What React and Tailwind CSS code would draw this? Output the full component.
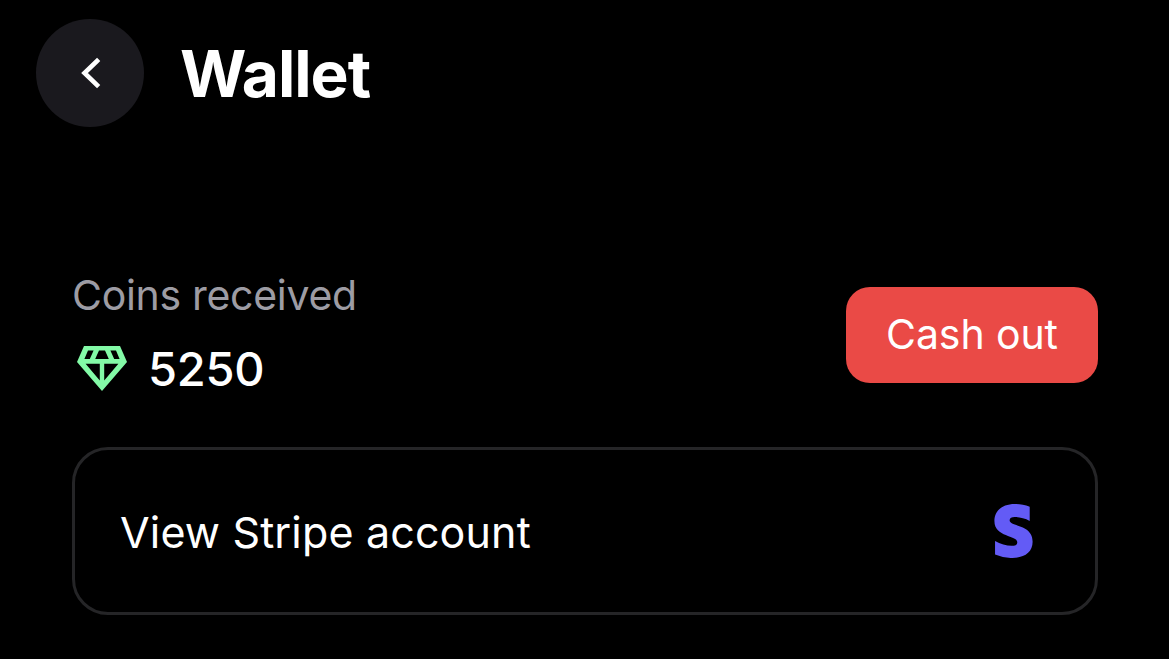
import React from 'react';
import { FaStripeS } from 'react-icons/fa';

const BackIcon = () => (
  <svg width="32" height="36" viewBox="0 0 32 36" fill="none">
    <path d="M23 6 L10.5 18 L23 30" stroke="#fff" strokeWidth="4.6" strokeLinecap="square" />
  </svg>
);

const GemIcon = () => (
  <svg width="50" height="45" viewBox="0 0 50 45" fill="#83faa7" fillRule="evenodd">
    <path
      d="M7 0 H43 L50 16 L25 45 L0 16 Z
         M11 4.6 L7.4 13 H12.8 L16.6 4.6 Z
         M22 4.6 L18.2 13 H31.8 L28 4.6 Z
         M33.4 4.6 L37.2 13 H42.6 L39 4.6 Z
         M8.6 17.8 H22.8 V34.4 Z
         M27.2 17.8 H41.4 L27.2 34.4 Z"
    />
  </svg>
);

const App = () => {
  const coins = 5250;

  return (
    <div className="h-[659px] w-[1169px] overflow-hidden bg-black font-['Inter',sans-serif] text-white">
      <header className="flex items-center gap-9 pt-[19px] pl-9">
        <button className="flex size-[108px] items-center justify-center rounded-full bg-[#1a191e]">
          <BackIcon />
        </button>
        <h1 className="pt-0.5 text-[64px] leading-[78px] font-bold tracking-[-1px]">Wallet</h1>
      </header>

      <main className="mt-[147px] pr-[71px] pl-[72px]">
        <section className="flex h-[122px] items-center justify-between">
          <div className="pb-[7px]">
            <p className="text-[41px] leading-[50px] tracking-[-0.3px] text-[#9d9ca4]">Coins received</p>
            <div className="mt-6 flex items-center gap-[21px] pl-[5px]">
              <GemIcon />
              <span className="text-[47px] leading-[50px] font-medium tracking-[-0.3px]">{coins}</span>
            </div>
          </div>
          <button className="h-24 w-[252px] rounded-[24px] bg-[#ea4a46] pb-0.5 text-[41px] leading-[50px] tracking-[-0.1px]">
            Cash out
          </button>
        </section>

        <button className="mt-[51px] flex h-[168px] w-full items-center justify-between rounded-[36px] border-[3px] border-[#252527] pr-[61px] pl-[45px]">
          <span className="pt-0.5 text-[43px] leading-[50px] tracking-[0.15px]">View Stripe account</span>
          <FaStripeS className="h-[54px] w-[41px] text-[#635bf6]" />
        </button>
      </main>
    </div>
  );
};

export default App;
